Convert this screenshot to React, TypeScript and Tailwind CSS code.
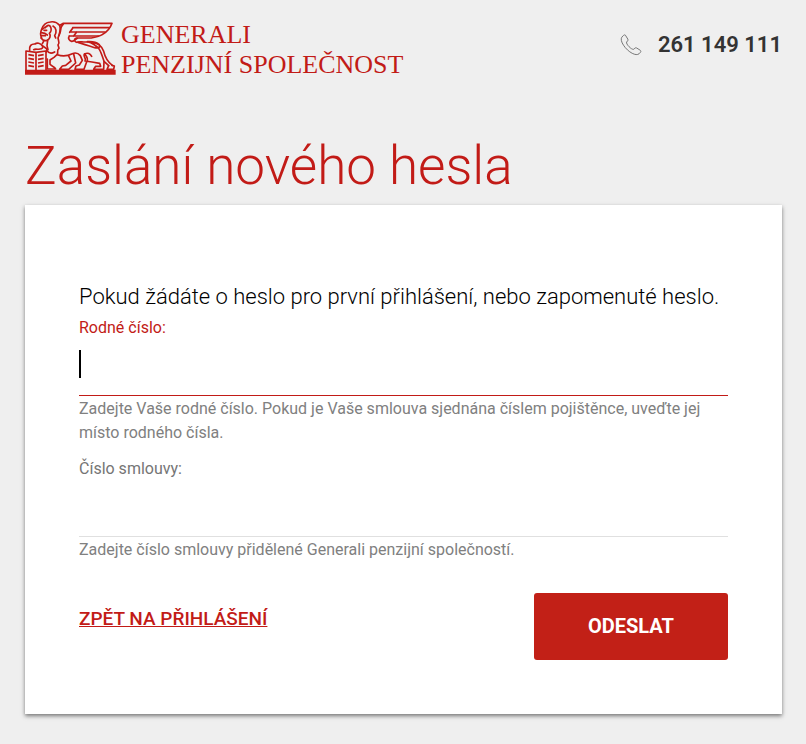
import { useState } from "react";

function LionLogo() {
  return (
    <svg viewBox="30 30 273 165" className="h-[55px] w-[91px] shrink-0" fill="none" stroke="#c21b17" strokeWidth="5" strokeLinejoin="round" strokeLinecap="round" aria-hidden="true">
      <path d="M30 179H302V194H30Z" fill="#c21b17" stroke="none" />
      <path d="M33 179V123L63 127L93 123V179M63 127V179" />
      <path d="M40 134L57 137M40 145L57 148M40 156L57 159M40 167L57 170M86 134L69 137M86 145L69 148M86 156L69 159M86 167L69 170" strokeLinecap="butt" />
      <path d="M44 121C42 108 49 101 60 102C66 97 76 99 82 107C86 112 81 117 75 117C67 119 61 116 56 119" />
      <path d="M82 107L96 117L94 126" />
      <path d="M80 84C76 76 76 66 80 58C84 45 93 37 106 36C116 34 127 38 134 46L136 56C139 65 133 70 132 77" />
      <path d="M80 59C86 55 89 50 96 49M79 68L90 70L97 75M80 77L91 77M78 84C83 91 91 94 98 90C105 86 108 77 103 70C109 65 110 57 106 49C101 44 94 46 91 53M87 61L95 61" />
      <path d="M114 48C124 53 126 66 119 77L122 84M98 91L96 107L99 119M87 92L82 101" />
      <path d="M136 45L145 40H291C286 54 276 66 263 73C252 80 239 82 229 84L184 84C177 86 177 94 184 97C192 94 200 96 206 96H218" />
      <path d="M173 53H283M166 66H270M162 78H250M174 53L164 67M185 66L176 78M163 78C158 85 163 92 170 94C177 95 181 88 187 85" />
      <path d="M145 42C132 53 137 65 131 78C124 88 138 94 129 105L132 115C123 122 132 126 126 134L117 142L105 150V163C110 169 119 169 122 177H97V147" />
      <path d="M96 122C101 130 109 132 119 126" />
      <path d="M127 134C143 140 158 138 172 131C181 127 190 130 196 137L202 151L193 165L183 168L180 178H207L214 158C221 151 216 139 209 132C218 127 226 131 230 139" />
      <path d="M161 138L168 153L152 166L142 168L134 178H161L182 159L176 132" />
      <path d="M189 97C206 102 224 108 239 113C250 116 257 112 253 104C245 97 231 94 217 95C233 99 244 107 253 118C259 128 262 139 267 154L281 167M231 97C248 98 262 110 266 124C270 141 280 157 292 166" />
      <path d="M209 132C202 138 216 145 210 153L231 156L254 160L257 169H242L236 178H266L267 155M281 167L276 178H296L298 168L291 166" />
    </svg>
  );
}

function PhoneIcon() {
  return (
    <svg viewBox="0 0 22 22" className="h-[22px] w-[22px]" fill="none" stroke="#777777" strokeWidth="1" strokeLinejoin="round" aria-hidden="true">
      <path d="M5.4 1.2C4.8.7 4.1.8 3.6 1.3L1.8 3.2C.6 5 1.4 8.1 3.5 11.2C5.6 14.5 9 17.7 12.2 19.3C15 20.8 17.6 21 19 19.8L20.5 18.2C21 17.6 20.9 16.8 20.3 16.3L16.7 14C16.1 13.6 15.4 13.7 14.9 14.2L13.7 15.3C12.6 15.6 10.7 14.4 9.1 12.7C7.4 11 6.2 9.1 6.6 8L7.7 6.8C8.1 6.3 8.2 5.7 7.8 5.1Z" />
    </svg>
  );
}

export default function App() {
  const [birthNumber, setBirthNumber] = useState("");
  const [contract, setContract] = useState("");

  return (
    <div className="min-h-screen bg-[#efefef] px-6 pb-[30px] font-[Roboto,sans-serif] text-[#212121]">
      <header className="flex items-start justify-between pl-px pt-5">
        <a href="#" className="flex gap-[5px] text-[#c21b17]">
          <LionLogo />
          <span className="whitespace-nowrap font-['Liberation_Serif',serif] text-[26px] leading-[30px]">
            <span className="block">GENERALI</span>
            <span className="block">PENZIJNÍ SPOLEČNOST</span>
          </span>
        </a>
        <a href="tel:261149111" className="mt-2 flex items-center gap-4 whitespace-nowrap text-[22px] leading-[34px] font-semibold text-[#333333]">
          <PhoneIcon />
          261 149 111
        </a>
      </header>

      <main className="pl-px">
        <h1 className="mt-[52px] text-[53px] leading-[68px] font-light text-[#c21b17]">Zaslání nového hesla</h1>
        <form
          onSubmit={(e) => e.preventDefault()}
          className="mt-[5px] bg-white px-[54px] pt-[76px] pb-[54px] shadow-[0_2px_4px_rgba(0,0,0,0.5)]"
        >
          <p className="text-[22px] leading-[32px] font-light text-black">Pokud žádáte o heslo pro první přihlášení, nebo zapomenuté heslo.</p>

          <div className="pt-[3px]">
            <label htmlFor="birth-number" className="block text-base leading-6 text-[#c21b17]">Rodné číslo:</label>
            <div className="relative">
              <input
                id="birth-number"
                value={birthNumber}
                onChange={(e) => setBirthNumber(e.target.value)}
                className="block h-14 w-full border-b border-[#c21b17] bg-transparent text-2xl caret-transparent outline-none"
              />
              <span className="absolute left-0 top-[10px] h-7 w-0.5 bg-black" />
            </div>
            <p className="pt-px text-base leading-6 text-[#808080]">
              Zadejte Vaše rodné číslo. Pokud je Vaše smlouva sjednána číslem pojištěnce, uveďte jej místo rodného čísla.
            </p>
          </div>

          <div className="pt-3">
            <label htmlFor="contract-number" className="block text-base leading-6 text-[#757575]">Číslo smlouvy:</label>
            <input
              id="contract-number"
              value={contract}
              onChange={(e) => setContract(e.target.value)}
              className="block h-14 w-full border-b border-[#e0e0e0] bg-transparent text-2xl outline-none"
            />
            <p className="pt-px text-base leading-6 text-[#808080]">
              Zadejte číslo smlouvy přidělené Generali penzijní společností.
            </p>
          </div>

          <div className="mt-[31px] flex items-start justify-between">
            <a href="#" className="mt-3 text-[19px] leading-7 font-medium text-[#c21b17] underline">ZPĚT NA PŘIHLÁŠENÍ</a>
            <button type="submit" className="h-[67px] w-[194px] rounded-[3px] bg-[#c22017] pb-0.5 text-[20px] font-bold text-white">ODESLAT</button>
          </div>
        </form>
      </main>
    </div>
  );
}
